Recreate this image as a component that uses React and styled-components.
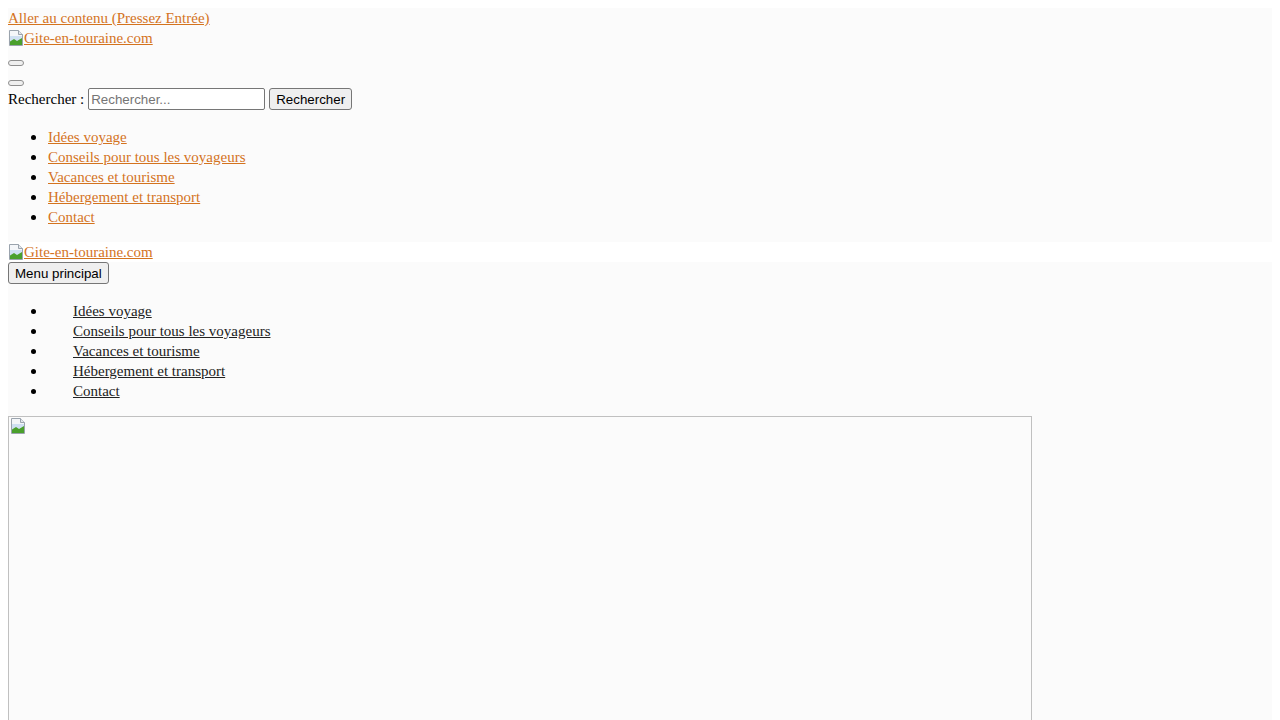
import styled, { createGlobalStyle } from "styled-components";

const GlobalStyle = createGlobalStyle`
  html, body {
    margin: 0;
    padding: 0;
    background: #ffffff;
  }
  body {
    padding: 8px;
    font-family: "Liberation Serif", "Times New Roman", serif;
    font-size: 15px;
    line-height: 20px;
    color: #000;
  }
`;

const navItems = [
  "Idées voyage",
  "Conseils pour tous les voyageurs",
  "Vacances et tourisme",
  "Hébergement et transport",
  "Contact",
];

const Page = styled.div`
  display: flex;
  flex-direction: column;
`;

const Header = styled.header`
  background: #fbfbfb;
`;

const Link = styled.a`
  color: ${(p) => (p.$dark ? "#222222" : "#d4731e")};
  text-decoration: underline;
  padding-left: ${(p) => (p.$indent ? "25px" : "0")};
`;

const LogoLink = styled.a`
  display: flex;
  align-items: flex-end;
  height: 20px;
  color: #d4731e;
  text-decoration: underline;

  svg {
    flex: none;
    margin-bottom: 2px;
  }
`;

const ToggleRow = styled.div`
  box-sizing: border-box;
  height: 20px;
  padding-top: 12px;
`;

const ToggleButton = styled.button`
  display: block;
  width: 16px;
  height: 6px;
  margin: 0;
  padding: 0;
  border: 1px solid #8f8f8f;
  border-radius: 3px;
  background: #efefef;
`;

const SearchForm = styled.form`
  display: flex;
  align-items: center;
  gap: 4px;
  height: 22px;
`;

const Label = styled.label`
  white-space: nowrap;
`;

const SearchInput = styled.input`
  box-sizing: border-box;
  width: 177px;
  height: 22px;
  padding: 1px 2px;
  border: 1px solid #767676;
  border-radius: 2px;
  background: #fff;
  font: 13.33px "Liberation Sans", Arial, sans-serif;
  color: #000;

  &::placeholder {
    color: #757575;
  }
`;

const Button = styled.button`
  box-sizing: border-box;
  height: 22px;
  padding: 1px 6px;
  border: 1px solid #767676;
  border-radius: 3px;
  background: #efefef;
  font: 13.33px "Liberation Sans", Arial, sans-serif;
  color: #000;
  align-self: flex-start;
`;

const List = styled.ul`
  margin: 16px 0;
  padding-left: 40px;
  list-style: disc;
`;

const Item = styled.li`
  height: 20px;
  overflow: visible;

  &::marker {
    font-size: 18px;
  }
`;

const WhiteRow = styled.div`
  background: #ffffff;
`;

const Main = styled.div`
  display: flex;
  flex-direction: column;
  background: #fbfbfb;
`;

const Figure = styled.div`
  box-sizing: border-box;
  width: 1024px;
  height: 683px;
  border: 1px solid #c0c0c0;
  padding: 1px;
`;

const BrokenImage = () => (
  <svg width="16" height="16" viewBox="0 0 16 16">
    <path d="M1.5 0.5h9l4 4v11h-13z" fill="#f4f6f9" stroke="#9aa3ad" />
    <path d="M10.5 0.5v4h4" fill="#e2e6ea" stroke="#9aa3ad" />
    <path d="M2 6h12v5H2z" fill="#cfe0f2" />
    <path d="M2 15v-3.5l4-2.5 3 2 5-3V15z" fill="#4aa02c" />
  </svg>
);

const App = () => {
  return (
    <Page>
      <GlobalStyle />
      <Header>
        <Link href="#content">Aller au contenu (Pressez Entrée)</Link>
        <LogoLink href="#">
          <BrokenImage />
          Gite-en-touraine.com
        </LogoLink>
        <ToggleRow>
          <ToggleButton />
        </ToggleRow>
        <ToggleRow>
          <ToggleButton />
        </ToggleRow>
        <SearchForm onSubmit={(e) => e.preventDefault()}>
          <Label htmlFor="s">Rechercher :</Label>
          <SearchInput id="s" type="search" placeholder="Rechercher..." />
          <Button type="submit">Rechercher</Button>
        </SearchForm>
        <List>
          {navItems.map((item) => (
            <Item key={item}>
              <Link href="#">{item}</Link>
            </Item>
          ))}
        </List>
      </Header>
      <WhiteRow>
        <LogoLink href="#">
          <BrokenImage />
          Gite-en-touraine.com
        </LogoLink>
      </WhiteRow>
      <Main id="content">
        <Button type="button">Menu principal</Button>
        <List>
          {navItems.map((item) => (
            <Item key={item}>
              <Link href="#" $dark $indent>
                {item}
              </Link>
            </Item>
          ))}
        </List>
        <Figure>
          <BrokenImage />
        </Figure>
      </Main>
    </Page>
  );
};

export default App;
